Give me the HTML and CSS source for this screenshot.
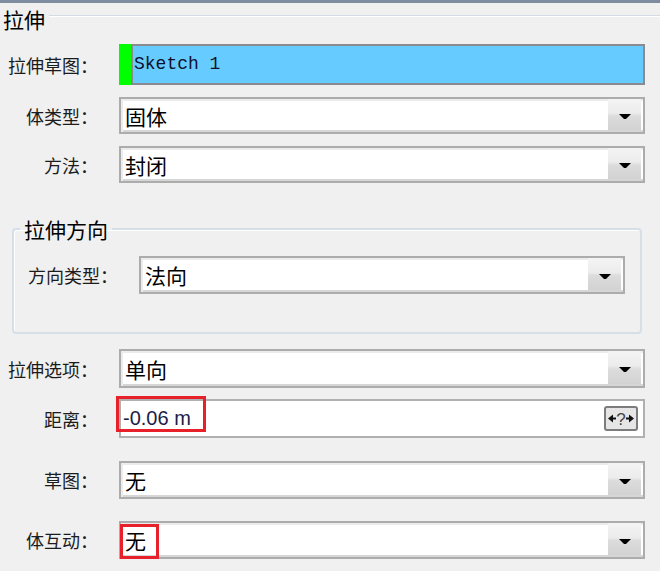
FILE: index.html
```html
<!DOCTYPE html>
<html lang="zh-CN">
<head>
  <meta charset="UTF-8">
  <title>拉伸</title>
  <link rel="stylesheet" href="styles.css">
</head>
<body>
  <div class="topbar"></div>

  <div class="section-head">
    <span class="section-title">拉伸</span>
    <span class="section-line"></span>
  </div>

  <div class="row row-1">
    <span class="lbl">拉伸草图：</span>
    <div class="sketch">
      <span class="sketch-mark"></span>
      <span class="sketch-box">Sketch 1</span>
    </div>
  </div>

  <div class="row row-2">
    <span class="lbl">体类型：</span>
    <div class="combo">
      <span class="combo-value">固体</span>
      <span class="combo-btn"><svg width="12" height="6" viewBox="0 0 12 6"><path d="M0 0h12l-5 5h-2z" fill="#000"/></svg></span>
    </div>
  </div>

  <div class="row row-3">
    <span class="lbl">方法：</span>
    <div class="combo">
      <span class="combo-value">封闭</span>
      <span class="combo-btn"><svg width="12" height="6" viewBox="0 0 12 6"><path d="M0 0h12l-5 5h-2z" fill="#000"/></svg></span>
    </div>
  </div>

  <fieldset class="group">
    <legend>拉伸方向</legend>
    <div class="row group-row">
      <span class="lbl">方向类型：</span>
      <div class="combo">
        <span class="combo-value">法向</span>
        <span class="combo-btn"><svg width="12" height="6" viewBox="0 0 12 6"><path d="M0 0h12l-5 5h-2z" fill="#000"/></svg></span>
      </div>
    </div>
  </fieldset>

  <div class="row row-4">
    <span class="lbl">拉伸选项：</span>
    <div class="combo">
      <span class="combo-value">单向</span>
      <span class="combo-btn"><svg width="12" height="6" viewBox="0 0 12 6"><path d="M0 0h12l-5 5h-2z" fill="#000"/></svg></span>
    </div>
  </div>

  <div class="row row-5">
    <span class="lbl">距离：</span>
    <div class="field">
      <span class="field-value">-0.06 m</span>
      <span class="mark mark-dist"></span>
      <span class="param-btn">
        <svg width="30" height="21" viewBox="0 0 30 21">
          <path d="M2 10.5l5-4v8z M7 9.5h3v2H7z M28 10.5l-5-4v8z M20 9.5h3v2h-3z" fill="#111"/>
          <text x="15" y="17" text-anchor="middle" font-family="Liberation Sans, sans-serif" font-size="17" fill="#444">?</text>
        </svg>
      </span>
    </div>
  </div>

  <div class="row row-6">
    <span class="lbl">草图：</span>
    <div class="combo">
      <span class="combo-value">无</span>
      <span class="combo-btn"><svg width="12" height="6" viewBox="0 0 12 6"><path d="M0 0h12l-5 5h-2z" fill="#000"/></svg></span>
    </div>
  </div>

  <div class="row row-7">
    <span class="lbl">体互动：</span>
    <div class="combo">
      <span class="combo-value">无</span>
      <span class="mark mark-body"></span>
      <span class="combo-btn"><svg width="12" height="6" viewBox="0 0 12 6"><path d="M0 0h12l-5 5h-2z" fill="#000"/></svg></span>
    </div>
  </div>
</body>
</html>
```

FILE: styles.css
```css
body {
  margin: 0;
  background-color: #f0f0f0;
  font-family: "Noto Sans CJK SC", "Liberation Sans", sans-serif;
  color: #000;
}
.topbar {
  height: 3px;
  background-color: #7e8ca0;
}
.section-head {
  display: flex;
  align-items: flex-start;
  height: 41px;
}
.section-title {
  margin-left: 3px;
  margin-top: 3px;
  font-size: 21px;
  line-height: 26px;
}
.section-line {
  flex: 1;
  margin-top: 12px;
  margin-left: 4px;
  border-top: 1px solid #d2dce6;
  border-bottom: 1px solid #ffffff;
}
.row {
  display: flex;
  align-items: center;
}
.lbl {
  width: 98px;
  margin-right: 21px;
  text-align: right;
  font-size: 18px;
  color: #1c1c1c;
  white-space: nowrap;
}
.row-1 { height: 41px; }
.row-2 { height: 37px; margin-top: 12px; }
.row-3 { height: 37px; margin-top: 12px; }
.row-4 { height: 39px; margin-top: 15px; }
.row-5 { height: 39px; margin-top: 11px; }
.row-6 { height: 38px; margin-top: 23px; }
.row-7 { height: 38px; margin-top: 22px; }

.sketch {
  display: flex;
  width: 526px;
  height: 100%;
}
.sketch-mark {
  width: 12px;
  background-color: #00ff00;
}
.sketch-box {
  flex: 1;
  border: 2px solid #8a8a90;
  background-color: #66ccff;
  padding-left: 1px;
  font-family: "Liberation Mono", monospace;
  font-size: 18px;
  line-height: 36px;
  color: #10102e;
}

.combo {
  position: relative;
  display: flex;
  box-sizing: border-box;
  width: 526px;
  height: 100%;
  border: 2px solid #acacac;
  background-color: #ffffff;
  box-shadow: inset 2px 2px 0 #ececec, inset 0 -2px 0 #d6d6d6;
}
.combo-value {
  flex: 1;
  padding-left: 4px;
  font-size: 21px;
  display: flex;
  align-items: center;
}
.combo-btn {
  width: 33px;
  margin: 0 2px 2px 0;
  display: flex;
  align-items: center;
  justify-content: center;
  padding-top: 5px;
  box-sizing: border-box;
  background: linear-gradient(#f4f4f4 0%, #ececec 45%, #dcdcdc 55%, #d2d2d2 100%);
}

.group {
  box-sizing: border-box;
  width: 630px;
  margin: 34px 0 0 12px;
  padding: 15px 15px 38px 14px;
  border: 2px solid #d6dfe8;
  border-radius: 4px;
  box-shadow: inset 1px 1px 0 #ffffff;
}
.group legend {
  margin-left: -8px;
  padding: 0 4px;
  font-size: 21px;
  line-height: 24px;
}
.group-row {
  height: 38px;
}
.group-row .lbl {
  width: 90px;
  margin-right: 21px;
  text-align: left;
}
.group-row .combo {
  width: 486px;
}

.field {
  position: relative;
  display: flex;
  align-items: center;
  box-sizing: border-box;
  width: 526px;
  height: 100%;
  border: 2px solid #b0b0b0;
  background-color: #ffffff;
}
.field-value {
  flex: 1;
  padding-left: 2px;
  font-family: "Liberation Sans", sans-serif;
  font-size: 20px;
  color: #1c1c48;
}
.param-btn {
  display: flex;
  align-items: center;
  justify-content: center;
  width: 30px;
  height: 21px;
  margin-right: 5px;
  border: 2px solid #7c7c7c;
  border-radius: 3px;
  background-color: #e6e6e6;
}

.mark {
  position: absolute;
  border: 3px solid #e8202a;
  box-sizing: border-box;
}
.mark-dist {
  left: -5px;
  top: -5px;
  width: 90px;
  height: 36px;
}
.mark-body {
  left: -1px;
  top: 1px;
  width: 39px;
  height: 35px;
}
```
